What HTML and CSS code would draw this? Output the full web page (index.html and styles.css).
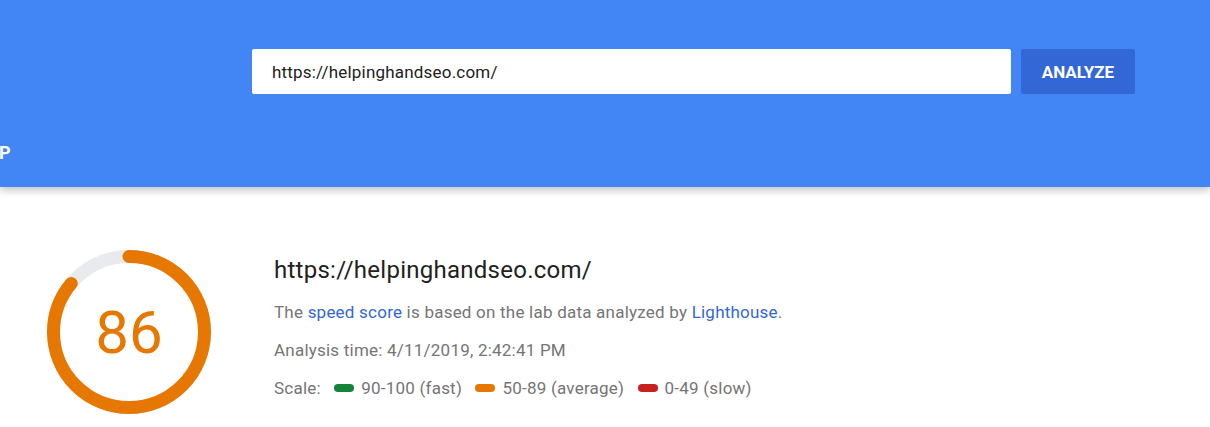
FILE: index.html
```html
<!DOCTYPE html>
<html lang="en">
<head>
    <meta charset="UTF-8">
    <meta name="viewport" content="width=device-width, initial-scale=1.0">
    <title>PageSpeed Insights</title>
    <link rel="stylesheet" href="styles.css">
</head>
<body>
    <header class="header">
        <form class="search">
            <input class="search-input" type="text" value="https://helpinghandseo.com/">
            <button class="search-btn" type="button">ANALYZE</button>
        </form>
        <div class="tabs">
            <span class="tab">P</span>
        </div>
    </header>

    <main class="result">
        <div class="gauge">
            <svg width="164" height="164" viewBox="0 0 164 164">
                <circle class="gauge-track" cx="82" cy="82" r="75.5"></circle>
                <circle class="gauge-arc" cx="82" cy="82" r="75.5"
                        stroke-dasharray="407.97 474.38" transform="rotate(-90 82 82)"></circle>
                <text class="gauge-value" x="82" y="103">86</text>
            </svg>
        </div>

        <div class="summary">
            <h1 class="summary-url">https://helpinghandseo.com/</h1>
            <p class="summary-line">The <a href="#">speed score</a> is based on the lab data analyzed by <a href="#">Lighthouse</a>.</p>
            <p class="summary-line">Analysis time: 4/11/2019, 2:42:41 PM</p>
            <p class="summary-line scale">
                Scale:
                <span class="pill pill-fast"></span>90-100 (fast)
                <span class="pill pill-average"></span>50-89 (average)
                <span class="pill pill-slow"></span>0-49 (slow)
            </p>
        </div>
    </main>
</body>
</html>
```

FILE: styles.css
```css
body {
    margin: 0;
    font-family: Roboto, "Liberation Sans", Arial, sans-serif;
    background: #fff;
    color: #212121;
}

/* Blue top bar */
.header {
    background: #4285f4;
    height: 187px;
    box-sizing: border-box;
    padding-top: 49px;
    box-shadow: 0 3px 8px rgba(0, 0, 0, 0.25);
    position: relative;
}

.search {
    display: flex;
    gap: 10px;
    margin: 0 0 0 252px;
}

.search-input {
    width: 759px;
    height: 45px;
    box-sizing: border-box;
    border: none;
    border-radius: 2px;
    padding: 0 20px;
    font-family: inherit;
    font-size: 17px;
    letter-spacing: 0.2px;
    color: #212121;
    background: #fff;
    outline: none;
}

.search-btn {
    width: 114px;
    height: 45px;
    border: none;
    border-radius: 2px;
    background: #3367d6;
    color: #fff;
    font-family: inherit;
    font-size: 17px;
    font-weight: 700;
    padding: 0;
}

.tabs {
    margin-top: 47px;
}

.tab {
    display: inline-block;
    color: #fff;
    font-size: 18px;
    font-weight: 700;
    line-height: 24px;
    margin-left: -1px;
}

/* Score section */
.result {
    display: flex;
    align-items: flex-start;
    gap: 63px;
    padding: 63px 0 0 47px;
}

.gauge svg {
    display: block;
}

.gauge-track,
.gauge-arc {
    fill: none;
    stroke-width: 13;
}

.gauge-track {
    stroke: #e8eaed;
}

.gauge-arc {
    stroke: #e67700;
    stroke-linecap: round;
}

.gauge-value {
    fill: #e67700;
    font-family: Roboto, "Liberation Sans", sans-serif;
    font-size: 60px;
    text-anchor: middle;
}

.summary {
    padding-top: 4px;
}

.summary-url {
    margin: 0;
    font-size: 24px;
    font-weight: 400;
    line-height: 32px;
    letter-spacing: 0.26px;
    color: #212121;
}

.summary-line {
    margin: 14px 0 0;
    font-size: 17px;
    line-height: 24px;
    letter-spacing: 0.22px;
    color: #757575;
}

.summary-line a {
    color: #3367d6;
    text-decoration: none;
}

.pill {
    display: inline-block;
    width: 20px;
    height: 8px;
    border-radius: 4px;
    margin: 0 7px 0 9px;
    vertical-align: 2px;
}

.pill-fast { background: #178239; }
.pill-average { background: #e67700; }
.pill-slow { background: #c7221f; }
```
